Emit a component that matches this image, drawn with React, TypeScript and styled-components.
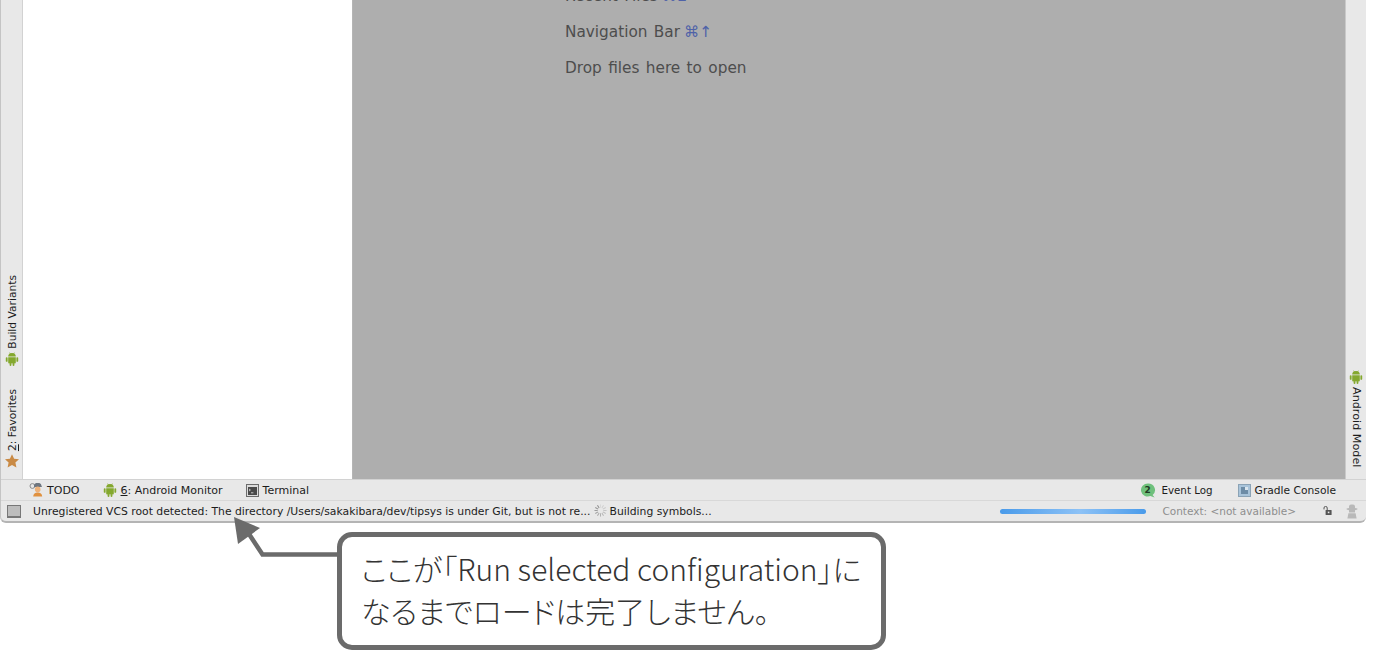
import React from 'react'
import styled, { createGlobalStyle } from 'styled-components'

const GlobalStyle = createGlobalStyle`
  html, body {
    margin: 0;
    padding: 0;
    background: #fff;
  }
`

const Page = styled.div`
  position: relative;
  width: 1381px;
  height: 657px;
  overflow: hidden;
  background: #fff;
  font-family: "DejaVu Sans", "Liberation Sans", sans-serif;
`

const IdeWindow = styled.div`
  width: 1366px;
  height: 523px;
  box-sizing: border-box;
  display: flex;
  flex-direction: column;
  background: #e8e8e8;
  border-left: 1px solid #c4c4c4;
  border-bottom: 2px solid #b4b4b4;
  border-radius: 0 0 6px 6px;
  overflow: hidden;
`

const Workspace = styled.div`
  display: flex;
  height: 479px;
  flex: none;
`

const Stripe = styled.div`
  width: 21px;
  flex: none;
  box-sizing: border-box;
  display: flex;
  flex-direction: column;
  justify-content: flex-end;
  align-items: center;
  background: #e8e8e8;
`

const LeftStripe = styled(Stripe)`
  margin-left: 1px;
  padding-bottom: 11px;
  border-right: 1px solid #d2d2d2;
`

const RightStripe = styled(Stripe)`
  padding-bottom: 12px;
  border-left: 1px solid #c9c9c9;
`

const VerticalTool = styled.div<{ $gap?: number }>`
  display: flex;
  flex-direction: column;
  align-items: center;
  gap: 3px;
  margin-top: ${p => p.$gap ?? 0}px;
`

const VerticalLabel = styled.span<{ $flip?: boolean; $size?: number }>`
  writing-mode: vertical-rl;
  transform: ${p => (p.$flip ? 'rotate(180deg)' : 'none')};
  font-size: ${p => p.$size ?? 10.7}px;
  line-height: 13px;
  color: #1c1c1c;
  white-space: nowrap;
`

const ProjectPanel = styled.div`
  width: 329px;
  flex: none;
  background: #fff;
  border-right: 1px solid #b5b5b5;
`

const Editor = styled.div`
  flex: 1;
  background: #aeaeae;
  overflow: hidden;
  padding-left: 212px;
`

const Hints = styled.div`
  display: flex;
  flex-direction: column;
  gap: 15px;
  margin-top: -14px;
`

const Hint = styled.div`
  font-size: 15.3px;
  line-height: 21px;
  word-spacing: 1.5px;
  color: #4d4d4d;
  white-space: nowrap;
`

const Shortcut = styled.span`
  color: #4f62a8;
  margin-left: 4px;
`

const ToolRow = styled.div`
  height: 22px;
  flex: none;
  box-sizing: border-box;
  display: flex;
  align-items: center;
  padding: 0 30px 0 28px;
  border-top: 1px solid #d2d2d2;
  border-bottom: 1px solid #d8d8d8;
`

const ToolItem = styled.div<{ $gap?: number; $size?: number; $after?: number }>`
  display: flex;
  align-items: center;
  gap: ${p => p.$gap ?? 3}px;
  margin-right: ${p => p.$after ?? 23}px;
  font-size: ${p => p.$size ?? 11}px;
  color: #1c1c1c;
  white-space: nowrap;
`

const Spacer = styled.div`
  flex: 1;
`

const StatusRow = styled.div`
  flex: 1;
  display: flex;
  align-items: center;
  padding: 0 8px 0 6px;
  font-size: 10.8px;
  color: #1c1c1c;
  white-space: nowrap;
`

const StatusToggle = styled.div`
  width: 12px;
  height: 10px;
  flex: none;
  margin-right: 12px;
  background: #bdbdbd;
  border: 1px solid #777;
  border-bottom-width: 2px;
`

const Progress = styled.div`
  width: 146px;
  height: 5px;
  flex: none;
  margin-right: 16px;
  border-radius: 3px;
  background: linear-gradient(90deg, #4a9bea, #8dc2f6 55%, #4a9bea);
`

const ContextLabel = styled.span`
  font-size: 10.5px;
  color: #8e8e8e;
  margin-right: 27px;
`

const Callout = styled.div`
  width: 549px;
  height: 118px;
  box-sizing: border-box;
  margin: 9px 0 0 337px;
  padding: 10px 0 0 19px;
  background: #fff;
  border: 5px solid #6b6b6b;
  border-radius: 15px;
  font-family: "Noto Sans CJK JP", "Open Sans", sans-serif;
  font-weight: 300;
  font-size: 30px;
  font-feature-settings: "palt";
  line-height: 42px;
  color: #333;
  white-space: nowrap;
`

const ArrowLayer = styled.svg`
  position: absolute;
  left: 225px;
  top: 510px;
`

const AndroidIcon: React.FC<{ $color?: string }> = ({ $color = '#84a82e' }) => (
  <svg width="14" height="14" viewBox="0 0 14 14">
    <path fill={$color} d="M3.2 4.6a3.8 3.6 0 0 1 7.6 0ZM3.2 5.2h7.6v5.4a.9.9 0 0 1-.9.9H4.1a.9.9 0 0 1-.9-.9Z" />
    <rect x="0.8" y="5.2" width="1.8" height="4.6" rx="0.9" fill={$color} />
    <rect x="11.4" y="5.2" width="1.8" height="4.6" rx="0.9" fill={$color} />
    <rect x="4.6" y="11" width="1.8" height="3" rx="0.9" fill={$color} />
    <rect x="7.6" y="11" width="1.8" height="3" rx="0.9" fill={$color} />
    <path stroke={$color} strokeWidth="0.7" d="M4.6 0.6l1 1.6M9.4 0.6l-1 1.6" />
  </svg>
)

const StarIcon = () => (
  <svg width="14" height="14" viewBox="0 0 14 14">
    <path fill="#c98a45" d="M7 .2l2.1 4.5 4.9.5-3.6 3.3 1 4.9L7 11l-4.4 2.4 1-4.9L0 5.2l4.9-.5Z" />
  </svg>
)

const TodoIcon = () => (
  <svg width="15" height="14" viewBox="0 0 15 14">
    <circle cx="3.4" cy="3" r="2.4" fill="#e8e8e8" stroke="#8a8a8a" strokeWidth="1" />
    <path fill="#6e7680" d="M5 2.5a3.6 2.6 0 0 1 7.4 0l.6 1.6H5Z" />
    <circle cx="8.7" cy="6.4" r="2.8" fill="#eeb27a" />
    <path fill="#e0913f" d="M4.2 13.6c0-2.8 2-4 4.5-4s4.5 1.2 4.5 4Z" />
  </svg>
)

const TerminalIcon = () => (
  <svg width="13" height="13" viewBox="0 0 13 13">
    <rect x="0.5" y="0.5" width="12" height="12" fill="#dcdcdc" stroke="#6c6c6c" />
    <rect x="2" y="3" width="9" height="8" fill="#4a4a4a" />
    <path stroke="#e6e6e6" strokeWidth="0.8" fill="none" d="M3 5l1.4 1L3 7M5 8.8h2.4" />
  </svg>
)

const EventBubble = () => (
  <svg width="16" height="15" viewBox="0 0 16 15">
    <path fill="#6fc07c" d="M8 .5a7 6.5 0 0 1 4.6 11.4l2 2.6-4.2-1.4A7 6.5 0 1 1 8 .5Z" />
    <text x="7.6" y="10.2" textAnchor="middle" fontSize="9" fontWeight="700" fontFamily="'DejaVu Sans', sans-serif" fill="#1f3a24">2</text>
  </svg>
)

const GradleIcon = () => (
  <svg width="13" height="13" viewBox="0 0 13 13">
    <rect x="0.5" y="0.5" width="12" height="12" fill="#a9c4da" stroke="#8ba3b6" />
    <rect x="3" y="3" width="7" height="7" fill="#6d8ca6" />
    <rect x="7" y="3" width="3" height="3" fill="#dbe6ee" />
  </svg>
)

const Spinner = () => (
  <svg width="13" height="13" viewBox="0 0 14 14" style={{ margin: '0 3px 2px 3px' }}>
    {Array.from({ length: 12 }, (_, i) => (
      <rect key={i} x="6.5" y="0.5" width="1" height="3.5" fill="#777" opacity={0.15 + (i / 12) * 0.75} transform={`rotate(${i * 30} 7 7)`} />
    ))}
  </svg>
)

const LockIcon = () => (
  <svg width="10" height="10" viewBox="0 0 10 10" style={{ marginRight: 13 }}>
    <path stroke="#555" strokeWidth="1" fill="none" d="M1 3.4V2a1.6 1.6 0 0 1 3.2 0v2" />
    <rect x="2.6" y="4" width="6" height="5" rx="0.6" fill="#555" />
    <rect x="4.8" y="5.6" width="1.6" height="1.6" fill="#e8e8e8" />
  </svg>
)

const InspectorIcon = () => (
  <svg width="12" height="15" viewBox="0 0 12 15">
    <path fill="#b9b9b9" d="M3 4V2.4A2 2 0 0 1 5 .5h2a2 2 0 0 1 2 1.9V4l2.4.6v1L9 6.2v2.2H3V6.2L.6 5.6v-1ZM2.4 9.2h7.2l1 5.3H1.4Z" />
  </svg>
)

const Arrow = () => (
  <ArrowLayer width="115" height="60" viewBox="225 510 115 60">
    <path fill="none" stroke="#6b6b6b" strokeWidth="4.5" d="M340 554.5H262.5L247 531" />
    <path fill="#6b6b6b" d="M234 517L238 544L260 528Z" />
  </ArrowLayer>
)

export default function App() {
  return (
    <Page>
      <GlobalStyle />
      <IdeWindow>
        <Workspace>
          <LeftStripe>
            <VerticalTool>
              <VerticalLabel $flip>Build Variants</VerticalLabel>
              <AndroidIcon />
            </VerticalTool>
            <VerticalTool $gap={23}>
              <VerticalLabel $flip><u>2</u>: Favorites</VerticalLabel>
              <StarIcon />
            </VerticalTool>
          </LeftStripe>
          <ProjectPanel />
          <Editor>
            <Hints>
              <Hint>Recent Files<Shortcut>⌘E</Shortcut></Hint>
              <Hint>Navigation Bar<Shortcut>⌘↑</Shortcut></Hint>
              <Hint>Drop files here to open</Hint>
            </Hints>
          </Editor>
          <RightStripe>
            <VerticalTool>
              <AndroidIcon />
              <VerticalLabel $size={11.2}>Android Model</VerticalLabel>
            </VerticalTool>
          </RightStripe>
        </Workspace>
        <ToolRow>
          <ToolItem><TodoIcon />TODO</ToolItem>
          <ToolItem $gap={4}><AndroidIcon /><span><u>6</u>: Android Monitor</span></ToolItem>
          <ToolItem $gap={4}><TerminalIcon />Terminal</ToolItem>
          <Spacer />
          <ToolItem $gap={5} $size={10.3} $after={25}><EventBubble />Event Log</ToolItem>
          <ToolItem $gap={4} $size={10.7} $after={0}><GradleIcon />Gradle Console</ToolItem>
        </ToolRow>
        <StatusRow>
          <StatusToggle />
          <span>Unregistered VCS root detected: The directory /Users/sakakibara/dev/tipsys is under Git, but is not re...</span>
          <Spinner />
          <span>Building symbols...</span>
          <Spacer />
          <Progress />
          <ContextLabel>Context: &lt;not available&gt;</ContextLabel>
          <LockIcon />
          <InspectorIcon />
        </StatusRow>
      </IdeWindow>
      <Callout>
        ここが「Run selected configuration」に<br />
        なるまでロードは完了しません。
      </Callout>
      <Arrow />
    </Page>
  )
}
